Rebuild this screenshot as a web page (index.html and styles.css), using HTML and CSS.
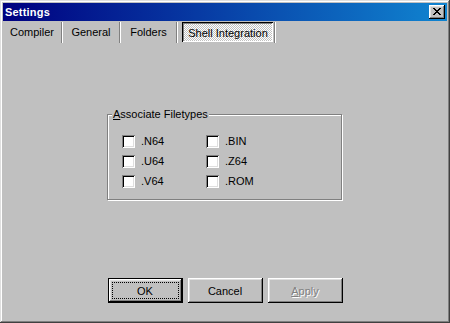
FILE: index.html
```html
<!DOCTYPE html>
<html>
<head>
<meta charset="utf-8">
<link rel="stylesheet" href="styles.css">
</head>
<body>
<div class="window">
  <div class="titlebar">
    <span class="title">Settings</span>
    <div class="close">
      <svg width="8" height="7" viewBox="0 0 8 7" shape-rendering="crispEdges">
        <path d="M0 0h2v1h-2zM6 0h2v1h-2zM1 1h2v1h-2zM5 1h2v1h-2zM2 2h4v1h-4zM3 3h2v1h-2zM2 4h4v1h-4zM1 5h2v1h-2zM5 5h2v1h-2zM0 6h2v1h-2zM6 6h2v1h-2z" fill="#000"/>
      </svg>
    </div>
  </div>
  <div class="tabs">
    <div class="tab t1">Compiler</div>
    <div class="sep"></div>
    <div class="tab t2">General</div>
    <div class="sep"></div>
    <div class="tab t3">Folders</div>
    <div class="sep"></div>
    <div class="tab selected">Shell Integration</div>
    <div class="sep"></div>
  </div>
  <div class="content">
    <div class="group">
      <div class="legend"><u>A</u>ssociate Filetypes</div>
      <div class="grid">
        <div class="check"><span class="box"></span><span>.N64</span></div>
        <div class="check"><span class="box"></span><span>.BIN</span></div>
        <div class="check"><span class="box"></span><span>.U64</span></div>
        <div class="check"><span class="box"></span><span>.Z64</span></div>
        <div class="check"><span class="box"></span><span>.V64</span></div>
        <div class="check"><span class="box"></span><span>.ROM</span></div>
      </div>
    </div>
    <div class="buttons">
      <div class="btn default"><span class="focus">OK</span></div>
      <div class="btn">Cancel</div>
      <div class="btn disabled"><u>A</u>pply</div>
    </div>
  </div>
</div>
</body>
</html>
```
FILE: styles.css
```css
html, body {
  margin: 0;
  padding: 0;
  background: #c0c0c0;
}
body {
  font-family: "Liberation Sans", Arial, sans-serif;
  font-size: 11px;
  color: #000;
}
.window {
  width: 450px;
  height: 323px;
  box-sizing: border-box;
  padding: 3px;
  background: #c0c0c0;
  display: flex;
  flex-direction: column;
  box-shadow: inset -1px -1px #404040, inset 1px 1px #dfdfdf, inset -2px -2px #808080, inset 2px 2px #fff;
}
.titlebar {
  height: 18px;
  flex: none;
  display: flex;
  align-items: center;
  justify-content: space-between;
  background: linear-gradient(90deg, #000080, #1084d0);
  padding: 0 2px 0 2px;
}
.title {
  color: #fff;
  font-weight: bold;
  font-size: 11px;
  letter-spacing: 0.2px;
}
.close {
  width: 16px;
  height: 14px;
  box-sizing: border-box;
  background: #c0c0c0;
  display: flex;
  align-items: center;
  justify-content: center;
  padding: 0 1px 1px 0;
  box-shadow: inset -1px -1px #000, inset 1px 1px #fff, inset -2px -2px #808080, inset 2px 2px #dfdfdf;
}
.close svg { display: block; }
.tabs {
  margin-top: 1px;
  height: 21px;
  flex: none;
  display: flex;
}
.tab {
  display: flex;
  align-items: center;
  justify-content: center;
  padding-bottom: 1px;
}
.t1 { width: 58px; }
.t2 { width: 56px; }
.t3 { width: 55px; }
.sep {
  width: 2px;
  background: linear-gradient(90deg, #808080 50%, #fff 50%);
}
.selected {
  width: 91px;
  height: 20px;
  box-sizing: border-box;
  margin: 0 1px 0 4px;
  background: repeating-conic-gradient(#fff 0 25%, #c0c0c0 0 50%) 0 0 / 2px 2px;
  box-shadow: inset 1px 1px #000, inset -1px -1px #fff, inset 2px 2px #808080;
  padding: 1px 0 0 1px;
}
.content {
  flex: 1;
  display: flex;
  flex-direction: column;
  align-items: center;
}
.group {
  margin-top: 71px;
  width: 235px;
  height: 86px;
  box-sizing: border-box;
  border: 1px solid #808080;
  box-shadow: 1px 1px 0 #fff, inset 1px 1px 0 #fff;
  margin-right: 1px;
}
.legend {
  width: fit-content;
  margin: -7px 0 0 4px;
  padding: 0 1px;
  line-height: 13px;
  background: #c0c0c0;
}
.grid {
  display: grid;
  grid-template-columns: 84px 84px;
  grid-auto-rows: 20px;
  padding: 10px 0 0 14px;
}
.check {
  display: flex;
  align-items: center;
}
.box {
  width: 13px;
  height: 13px;
  box-sizing: border-box;
  background: #fff;
  margin-right: 6px;
  box-shadow: inset 1px 1px #808080, inset -1px -1px #fff, inset 2px 2px #000, inset -2px -2px #dfdfdf;
}
.buttons {
  margin-top: 78px;
  display: flex;
  gap: 5px;
}
.btn {
  width: 75px;
  height: 25px;
  box-sizing: border-box;
  display: flex;
  align-items: center;
  justify-content: center;
  background: #c0c0c0;
  box-shadow: inset -1px -1px #000, inset 1px 1px #fff, inset -2px -2px #808080, inset 2px 2px #dfdfdf;
}
.btn.default {
  border: 1px solid #000;
  padding: 3px;
}
.focus {
  flex: 1;
  align-self: stretch;
  display: flex;
  align-items: center;
  justify-content: center;
  border: 1px dotted #000;
}
.btn.disabled {
  color: #808080;
  text-shadow: 1px 1px 0 #fff;
}
```
